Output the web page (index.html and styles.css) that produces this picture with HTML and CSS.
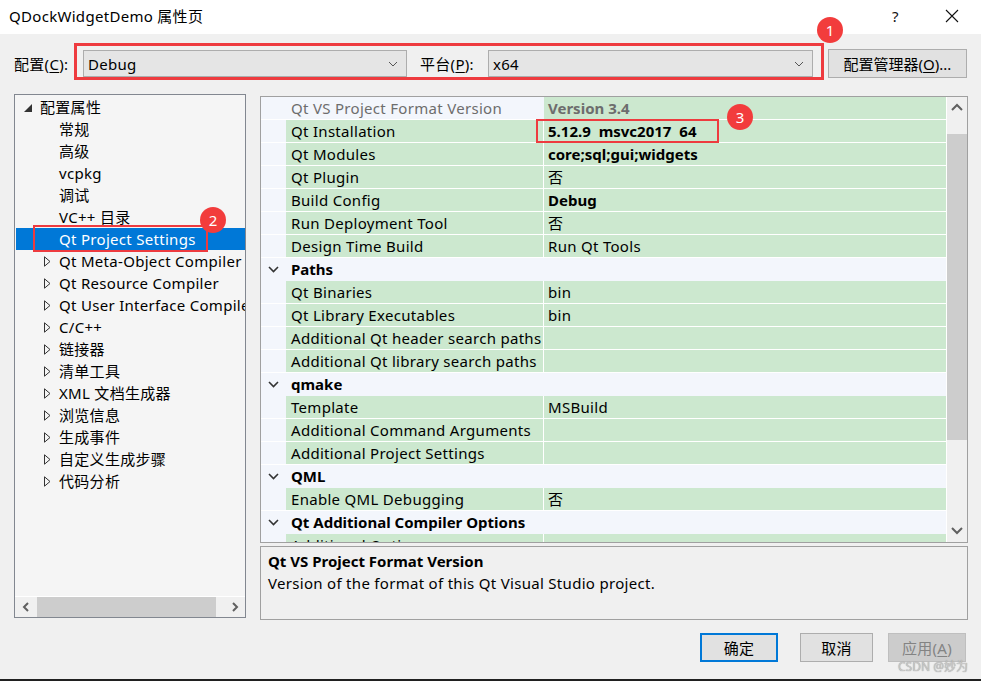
FILE: index.html
```html
<!DOCTYPE html>
<html lang="zh-CN">
<head>
<meta charset="utf-8">
<title>QDockWidgetDemo 属性页</title>
<link rel="stylesheet" href="styles.css">
</head>
<body>
<div class="window">
  <div class="titlebar">
    <span class="title">QDockWidgetDemo 属性页</span>
    <span class="tb-help">?</span>
    <span class="tb-close"><svg width="14" height="14" viewBox="0 0 14 14"><path d="M1 1L13 13M13 1L1 13" stroke="#111" stroke-width="1.1" fill="none"/></svg></span>
  </div>
  <div class="content">
    <div class="toolbar">
      <span class="lbl lbl-config">配置(<u>C</u>):</span>
      <div class="combo combo-config"><span>Debug</span><svg class="dd" width="10" height="6" viewBox="0 0 10 6"><path d="M1 1L5 5L9 1" stroke="#555" stroke-width="1" fill="none"/></svg></div>
      <span class="lbl lbl-platform">平台(<u>P</u>):</span>
      <div class="combo combo-platform"><span>x64</span><svg class="dd" width="10" height="6" viewBox="0 0 10 6"><path d="M1 1L5 5L9 1" stroke="#555" stroke-width="1" fill="none"/></svg></div>
      <div class="btn btn-mgr">配置管理器(<u>O</u>)...</div>
    </div>
    <div class="main">
      <div class="tree">
        <div class="tree-list">
          <div class="trow root"><svg class="exp-root" width="8" height="8" viewBox="0 0 8 8"><path d="M8 0L8 8L0 8Z" fill="#333"/></svg>配置属性</div>
          <div class="trow child">常规</div>
          <div class="trow child">高级</div>
          <div class="trow child">vcpkg</div>
          <div class="trow child">调试</div>
          <div class="trow child">VC++ 目录</div>
          <div class="trow child selected">Qt Project Settings</div>
          <div class="trow group"><svg class="exp" width="7" height="11" viewBox="0 0 7 11"><path d="M0.5 0.8L6 5.5L0.5 10.2Z" stroke="#333" stroke-width="1" fill="none"/></svg>Qt Meta-Object Compiler</div>
          <div class="trow group"><svg class="exp" width="7" height="11" viewBox="0 0 7 11"><path d="M0.5 0.8L6 5.5L0.5 10.2Z" stroke="#333" stroke-width="1" fill="none"/></svg>Qt Resource Compiler</div>
          <div class="trow group"><svg class="exp" width="7" height="11" viewBox="0 0 7 11"><path d="M0.5 0.8L6 5.5L0.5 10.2Z" stroke="#333" stroke-width="1" fill="none"/></svg>Qt User Interface Compiler</div>
          <div class="trow group"><svg class="exp" width="7" height="11" viewBox="0 0 7 11"><path d="M0.5 0.8L6 5.5L0.5 10.2Z" stroke="#333" stroke-width="1" fill="none"/></svg>C/C++</div>
          <div class="trow group"><svg class="exp" width="7" height="11" viewBox="0 0 7 11"><path d="M0.5 0.8L6 5.5L0.5 10.2Z" stroke="#333" stroke-width="1" fill="none"/></svg>链接器</div>
          <div class="trow group"><svg class="exp" width="7" height="11" viewBox="0 0 7 11"><path d="M0.5 0.8L6 5.5L0.5 10.2Z" stroke="#333" stroke-width="1" fill="none"/></svg>清单工具</div>
          <div class="trow group"><svg class="exp" width="7" height="11" viewBox="0 0 7 11"><path d="M0.5 0.8L6 5.5L0.5 10.2Z" stroke="#333" stroke-width="1" fill="none"/></svg>XML 文档生成器</div>
          <div class="trow group"><svg class="exp" width="7" height="11" viewBox="0 0 7 11"><path d="M0.5 0.8L6 5.5L0.5 10.2Z" stroke="#333" stroke-width="1" fill="none"/></svg>浏览信息</div>
          <div class="trow group"><svg class="exp" width="7" height="11" viewBox="0 0 7 11"><path d="M0.5 0.8L6 5.5L0.5 10.2Z" stroke="#333" stroke-width="1" fill="none"/></svg>生成事件</div>
          <div class="trow group"><svg class="exp" width="7" height="11" viewBox="0 0 7 11"><path d="M0.5 0.8L6 5.5L0.5 10.2Z" stroke="#333" stroke-width="1" fill="none"/></svg>自定义生成步骤</div>
          <div class="trow group"><svg class="exp" width="7" height="11" viewBox="0 0 7 11"><path d="M0.5 0.8L6 5.5L0.5 10.2Z" stroke="#333" stroke-width="1" fill="none"/></svg>代码分析</div>
        </div>
        <div class="hscroll">
          <svg class="sarrow" width="8" height="10" viewBox="0 0 8 10"><path d="M6 1L2 5L6 9" stroke="#606060" stroke-width="2" fill="none"/></svg>
          <div class="hthumb"></div>
          <svg class="sarrow" width="8" height="10" viewBox="0 0 8 10"><path d="M2 1L6 5L2 9" stroke="#606060" stroke-width="2" fill="none"/></svg>
        </div>
      </div>
      <div class="right">
        <div class="grid">
          <div class="grid-rows">
            <div class="prow readonly"><div class="gut"></div><div class="pname">Qt VS Project Format Version</div><div class="pval b">Version 3.4</div></div>
            <div class="prow"><div class="gut"></div><div class="pname">Qt Installation</div><div class="pval b wide">5.12.9 msvc2017 64</div></div>
            <div class="prow"><div class="gut"></div><div class="pname">Qt Modules</div><div class="pval b">core;sql;gui;widgets</div></div>
            <div class="prow"><div class="gut"></div><div class="pname">Qt Plugin</div><div class="pval">否</div></div>
            <div class="prow"><div class="gut"></div><div class="pname">Build Config</div><div class="pval b">Debug</div></div>
            <div class="prow"><div class="gut"></div><div class="pname">Run Deployment Tool</div><div class="pval">否</div></div>
            <div class="prow"><div class="gut"></div><div class="pname">Design Time Build</div><div class="pval">Run Qt Tools</div></div>
            <div class="crow"><svg class="cchev" width="11" height="7" viewBox="0 0 11 7"><path d="M1 1L5.5 5.5L10 1" stroke="#333" stroke-width="1.6" fill="none"/></svg><span>Paths</span></div>
            <div class="prow"><div class="gut"></div><div class="pname">Qt Binaries</div><div class="pval">bin</div></div>
            <div class="prow"><div class="gut"></div><div class="pname">Qt Library Executables</div><div class="pval">bin</div></div>
            <div class="prow"><div class="gut"></div><div class="pname">Additional Qt header search paths</div><div class="pval"></div></div>
            <div class="prow"><div class="gut"></div><div class="pname">Additional Qt library search paths</div><div class="pval"></div></div>
            <div class="crow"><svg class="cchev" width="11" height="7" viewBox="0 0 11 7"><path d="M1 1L5.5 5.5L10 1" stroke="#333" stroke-width="1.6" fill="none"/></svg><span>qmake</span></div>
            <div class="prow"><div class="gut"></div><div class="pname">Template</div><div class="pval">MSBuild</div></div>
            <div class="prow"><div class="gut"></div><div class="pname">Additional Command Arguments</div><div class="pval"></div></div>
            <div class="prow"><div class="gut"></div><div class="pname">Additional Project Settings</div><div class="pval"></div></div>
            <div class="crow"><svg class="cchev" width="11" height="7" viewBox="0 0 11 7"><path d="M1 1L5.5 5.5L10 1" stroke="#333" stroke-width="1.6" fill="none"/></svg><span>QML</span></div>
            <div class="prow"><div class="gut"></div><div class="pname">Enable QML Debugging</div><div class="pval">否</div></div>
            <div class="crow"><svg class="cchev" width="11" height="7" viewBox="0 0 11 7"><path d="M1 1L5.5 5.5L10 1" stroke="#333" stroke-width="1.6" fill="none"/></svg><span>Qt Additional Compiler Options</span></div>
            <div class="prow partial"><div class="gut"></div><div class="pname">Additional Options</div><div class="pval"></div></div>
          </div>
          <div class="vscroll">
            <div class="vbtn"><svg width="12" height="8" viewBox="0 0 12 8"><path d="M1 7L6 2L11 7" stroke="#606060" stroke-width="2" fill="none"/></svg></div>
            <div class="vthumb"></div>
            <div class="vtrack"></div>
            <div class="vbtn vbtn-down"><svg width="12" height="8" viewBox="0 0 12 8"><path d="M1 1L6 6L11 1" stroke="#606060" stroke-width="2" fill="none"/></svg></div>
          </div>
        </div>
        <div class="desc">
          <div class="desc-title">Qt VS Project Format Version</div>
          <div class="desc-text">Version of the format of this Qt Visual Studio project.</div>
        </div>
      </div>
    </div>
    <div class="buttons">
      <div class="btn btn-ok">确定</div>
      <div class="btn btn-cancel">取消</div>
      <div class="btn btn-apply">应用(<u>A</u>)</div>
    </div>
  </div>
  <div class="bottom-strip"></div>

  <div class="mark mark-1"></div>
  <div class="badge badge-1">1</div>
  <div class="mark mark-2"></div>
  <div class="badge badge-2">2</div>
  <div class="mark mark-3"></div>
  <div class="badge badge-3">3</div>
  <div class="watermark">CSDN @妙为</div>
</div>
</body>
</html>
```
FILE: styles.css
```css
* { box-sizing: border-box; }
html, body { margin: 0; padding: 0; }
body {
  width: 981px;
  height: 681px;
  overflow: hidden;
  font-family: "Noto Sans", "Noto Sans CJK SC", sans-serif;
  font-size: 15px;
  letter-spacing: 0.3px;
  color: #000;
  background: #f0f0f0;
}
.window {
  position: relative;
  width: 981px;
  height: 681px;
  background: #f0f0f0;
  display: flex;
  flex-direction: column;
}
u { text-decoration: underline; text-underline-offset: 2px; }

/* title bar */
.titlebar {
  height: 34px;
  background: #fff;
  display: flex;
  align-items: center;
  padding-left: 9px;
  flex: none;
}
.title { flex: 1; font-size: 15px; line-height: 20px; margin-top: -2px; }
.tb-help { width: 14px; font-size: 15px; margin-right: 39px; margin-top: -3px; color: #111; }
.tb-close { width: 14px; height: 14px; margin-right: 22px; margin-top: -3px; display: flex; }

/* content */
.content {
  flex: 1;
  padding: 15px 13px 0 14px;
  display: flex;
  flex-direction: column;
}
.toolbar {
  height: 29px;
  display: flex;
  align-items: center;
}
.lbl { white-space: nowrap; }
.lbl-config { width: 69px; }
.lbl-platform { width: 68px; margin-left: 13px; }
.combo {
  height: 27px;
  background: #e5e5e5;
  border: 1px solid #adadad;
  display: flex;
  align-items: center;
  justify-content: space-between;
  padding: 0 8px 0 4px;
}
.combo-config { width: 324px; }
.combo-platform { width: 325px; }
.btn {
  background: #e1e1e1;
  border: 1px solid #adadad;
  display: flex;
  align-items: center;
  justify-content: center;
  white-space: nowrap;
}
.btn-mgr { width: 139px; height: 29px; margin-left: 15px; letter-spacing: 0; }

/* main */
.main {
  margin-top: 16px;
  height: 526px;
  display: flex;
  gap: 14px;
}
.tree {
  width: 232px;
  height: 524px;
  border: 1px solid #828790;
  background: #f5f5f5;
  display: flex;
  flex-direction: column;
  overflow: hidden;
}
.tree-list { flex: 1; padding-top: 1px; overflow: hidden; }
.trow {
  height: 22px;
  line-height: 22px;
  white-space: nowrap;
  display: flex;
  align-items: center;
  padding-left: 44px;
  margin-right: -40px;
}
.trow.root { padding-left: 9px; }
.exp-root { margin-right: 8px; margin-top: 1px; flex: none; }
.trow.group { padding-left: 29px; }
.exp { margin-right: 8px; flex: none; }
.trow.selected { background: #0078d7; color: #fff; margin-left: 1px; padding-left: 43px; margin-right: 0; }
.hscroll {
  height: 21px;
  display: flex;
  align-items: center;
  background: #f0f0f0;
  border-top: 1px solid #fff;
  padding: 0 6px 0 7px;
}
.sarrow { flex: none; }
.hthumb { flex: none; width: 179px; height: 20px; background: #cdcdcd; margin: 0 15px 0 7px; }

.right { width: 708px; margin-top: 2px; display: flex; flex-direction: column; }
.grid {
  height: 447px;
  border: 1px solid #a0a0a0;
  background: #f3f6fc;
  display: flex;
  overflow: hidden;
}
.grid-rows { width: 685px; overflow: hidden; }
.prow {
  height: 23px;
  display: flex;
  border-bottom: 1px solid #fff;
}
.prow.partial { height: 9px; overflow: hidden; border-bottom: 0; }
.gut { width: 25px; background: #f3f6fc; flex: none; }
.pname {
  width: 258px;
  flex: none;
  background: #cce8cf;
  border-right: 1px solid #fff;
  padding: 1px 0 0 5px;
  line-height: 21px;
  white-space: nowrap;
  overflow: hidden;
}
.pval {
  flex: 1;
  background: #cce8cf;
  padding: 1px 0 0 4px;
  line-height: 21px;
  white-space: nowrap;
}
.pval.b { font-weight: bold; letter-spacing: 0; }
.pval.wide { word-spacing: 4px; }
.prow.readonly .pname { background: #f3f6fc; color: #6d6d6d; border-right-color: #f3f6fc; }
.prow.readonly .pval { color: #6d6d6d; }
.crow {
  height: 23px;
  display: flex;
  align-items: center;
  background: #f3f6fc;
  font-weight: bold;
  letter-spacing: 0;
}
.cchev { margin-left: 7px; margin-right: 12px; }
.crow span { line-height: 23px; }

.vscroll {
  width: 21px;
  background: #f0f0f0;
  display: flex;
  flex-direction: column;
  border-left: 1px solid #fff;
}
.vbtn { height: 37px; display: flex; justify-content: center; padding-top: 6px; }
.vbtn-down { height: 20px; padding-top: 5px; align-items: flex-start; }
.vthumb { height: 306px; background: #cdcdcd; }
.vtrack { flex: 1; }

.desc {
  margin-top: 3px;
  height: 74px;
  border: 1px solid #a0a0a0;
  background: #f0f0f0;
  padding: 3px 7px;
}
.desc-title { font-weight: bold; line-height: 22px; letter-spacing: 0; }
.desc-text { line-height: 22px; }

.buttons {
  margin-top: 13px;
  display: flex;
  justify-content: flex-end;
  padding-right: 2px;
}
.buttons .btn { height: 29px; }
.btn-ok { width: 78px; border: 2px solid #0078d7; }
.btn-cancel { width: 73px; margin-left: 22px; }
.btn-apply { width: 78px; margin-left: 15px; background: #cccccc; border-color: #bfbfbf; color: #838383; }

.bottom-strip { height: 2px; background: #202020; flex: none; }

/* annotations */
.mark { position: absolute; border: 3px solid #ee3b3f; }
.mark-1 { left: 74px; top: 43px; width: 750px; height: 37px; }
.mark-2 { left: 33px; top: 225px; width: 175px; height: 27px; border-width: 2.5px; }
.mark-3 { left: 536px; top: 119px; width: 183px; height: 24px; border-width: 2.5px; }
.badge {
  position: absolute;
  width: 26px;
  height: 26px;
  border-radius: 50%;
  background: #f23c3c;
  color: #fff;
  font-size: 15px;
  letter-spacing: 0;
  line-height: 26px;
  text-align: center;
}
.badge-1 { left: 817px; top: 17px; }
.badge-2 { left: 200px; top: 207px; }
.badge-3 { left: 727px; top: 104px; }
.watermark {
  position: absolute;
  left: 898px;
  top: 657px;
  font-size: 12px;
  letter-spacing: 0;
  color: #c8c8c8;
  text-shadow: 0 0 1px #888;
  white-space: nowrap;
}
```
